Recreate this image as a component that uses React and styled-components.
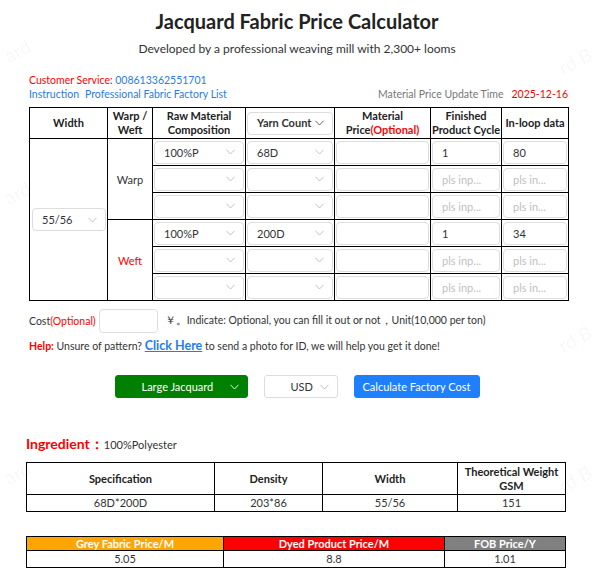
import React from "react";
import styled, { createGlobalStyle } from "styled-components";

const GlobalStyle = createGlobalStyle`
  body {
    margin: 0;
    background: #ffffff;
    font-family: Lato, "Liberation Sans", sans-serif;
    color: #333333;
  }
`;

const Page = styled.div`
  position: relative;
  width: 594px;
  overflow: hidden;
  padding-bottom: 16px;
`;

const Watermarks = styled.div`
  position: absolute;
  inset: 0;
  pointer-events: none;
`;

const Mark = styled.span`
  position: absolute;
  font-size: 19px;
  line-height: 22px;
  color: rgba(0, 0, 0, 0.045);
  transform: rotate(-28deg);
  white-space: nowrap;
`;

const Title = styled.h1`
  margin: 0;
  padding-top: 9px;
  text-align: center;
  font-size: 20px;
  font-weight: 700;
  color: #222222;
  line-height: 24px;
`;

const Subtitle = styled.div`
  margin-top: 8px;
  text-align: center;
  font-size: 12px;
  color: #333333;
  line-height: 16px;
`;

const Info = styled.div`
  margin: 16px 26px 0 29px;
  font-size: 10.5px;
  line-height: 14px;
`;

const InfoRow = styled.div`
  display: flex;
  justify-content: space-between;
  align-items: center;
`;

const Links = styled.div`
  display: flex;
  gap: 6px;
`;

const Red = styled.span`
  color: #ff0000;
  font-weight: ${(p) => (p.$bold ? 700 : 400)};
`;

const Blue = styled.span`
  color: #2a7be4;
`;

const Grey = styled.span`
  color: #777777;
  margin-right: 8px;
`;

const Table = styled.table`
  border-collapse: collapse;
  table-layout: fixed;
  margin: ${(p) => p.$margin || "0"};
  width: ${(p) => p.$width}px;
  font-size: 11px;

  th,
  td {
    border: 1px solid #000000;
    padding: 0;
    text-align: center;
  }
`;

const Head = styled.th`
  height: 30px;
  font-weight: 700;
  color: #222222;
  line-height: 14px;
`;

const Cell = styled.td`
  height: 26px;
  color: ${(p) => (p.$red ? "#ff0000" : "#333333")};
`;

const Box = styled.div`
  box-sizing: border-box;
  margin: 0 1px;
  height: 23px;
  border: 1px solid #dddddd;
  border-radius: 4px;
  display: flex;
  align-items: center;
  justify-content: space-between;
  padding: 0 8px 0 9px;
  background: #ffffff;
  color: ${(p) => (p.$placeholder ? "#c0c0c0" : "#333333")};
  font-size: 11px;
  font-weight: ${(p) => (p.$bold ? 700 : 400)};
  text-align: left;
  white-space: nowrap;
  overflow: hidden;
`;

const WidthBox = styled(Box)`
  width: 74px;
  margin: 0 2px;
`;

const Chevron = ({ color = "#bbbbbb" }) => (
  <svg width="9" height="6" viewBox="0 0 9 6" fill="none">
    <path d="M0.5 0.8 L4.5 5 L8.5 0.8" stroke={color} strokeWidth="0.9" />
  </svg>
);

const Select = ({ value, bold, chevron }) => (
  <Box $bold={bold}>
    <span>{value}</span>
    <Chevron color={chevron} />
  </Box>
);

const Input = ({ value, placeholder }) => (
  <Box $placeholder={!value && !!placeholder}>
    <span>{value || placeholder}</span>
  </Box>
);

const CostRow = styled.div`
  display: flex;
  align-items: center;
  margin: 8px 0 0 29px;
  font-size: 10.5px;
  color: #333333;
`;

const CostInput = styled.div`
  width: 59px;
  height: 24px;
  box-sizing: border-box;
  border: 1px solid #dddddd;
  border-radius: 4px;
  margin: 0 7px 0 3px;
`;

const HelpRow = styled.div`
  margin: 5px 0 0 29px;
  font-size: 10.5px;
  color: #333333;
  line-height: 16px;
`;

const ClickHere = styled.a`
  color: #1e7ef0;
  font-weight: 700;
  font-size: 12.5px;
  text-decoration: underline;
`;

const Actions = styled.div`
  display: flex;
  justify-content: center;
  gap: 16px;
  margin-top: 21px;
`;

const Button = styled.div`
  box-sizing: border-box;
  height: 23px;
  width: ${(p) => p.$w}px;
  border-radius: 3px;
  display: flex;
  align-items: center;
  justify-content: ${(p) => (p.$between ? "space-between" : "center")};
  padding: ${(p) => (p.$between ? "0 8px 0 26px" : "0")};
  font-size: 11px;
  background: ${(p) => p.$bg};
  color: ${(p) => p.$fg};
  border: 1px solid ${(p) => p.$border || p.$bg};
`;

const Ingredient = styled.div`
  margin: 37px 0 0 26px;
  font-size: 11px;
  display: flex;
  align-items: baseline;
  color: #333333;
`;

const IngLabel = styled.span`
  color: #ff0000;
  font-weight: 700;
  font-size: 14px;
`;

const SpecHead = styled.th`
  height: 31px;
  font-weight: 700;
  color: #222222;
  line-height: 14px;
`;

const SpecCell = styled.td`
  height: 16px;
  color: #333333;
  line-height: 14px;
`;

const PriceHead = styled.th`
  height: 13px;
  background: ${(p) => p.$bg};
  color: #ffffff;
  font-weight: 700;
  line-height: 13px;
`;

const rows = [
  { kind: "Warp", mat: "100%P", yarn: "68D", cycle: "1", loop: "80" },
  { kind: "Warp" },
  { kind: "Warp" },
  { kind: "Weft", mat: "100%P", yarn: "200D", cycle: "1", loop: "34" },
  { kind: "Weft" },
  { kind: "Weft" },
];

// only the slivers of the tiled watermark that fall inside the view
const marks = [
  { left: 4, top: 40, text: "ard" },
  { left: 558, top: 50, text: "rd B" },
  { left: 4, top: 182, text: "ard" },
  { left: 558, top: 328, text: "rd B" },
  { left: 4, top: 462, text: "ard" },
  { left: 558, top: 468, text: "rd B" },
];

export default function App() {
  return (
    <Page>
      <GlobalStyle />
      <Watermarks>
        {marks.map((m, i) => (
          <Mark key={i} style={{ left: m.left, top: m.top }}>
            {m.text}
          </Mark>
        ))}
      </Watermarks>

      <Title>Jacquard Fabric Price Calculator</Title>
      <Subtitle>Developed by a professional weaving mill with 2,300+ looms</Subtitle>

      <Info>
        <div>
          <Red>Customer Service: </Red>
          <Blue>008613362551701</Blue>
        </div>
        <InfoRow>
          <Links>
            <Blue>Instruction</Blue>
            <Blue>Professional Fabric Factory List</Blue>
          </Links>
          <div>
            <Grey>Material Price Update Time</Grey>
            <Red>2025-12-16</Red>
          </div>
        </InfoRow>
      </Info>

      <Table $width={539} $margin="6px 0 0 29px">
        <colgroup>
          <col style={{ width: 78 }} />
          <col style={{ width: 45 }} />
          <col style={{ width: 93 }} />
          <col style={{ width: 89 }} />
          <col style={{ width: 96 }} />
          <col style={{ width: 71 }} />
          <col style={{ width: 67 }} />
        </colgroup>
        <thead>
          <tr>
            <Head>Width</Head>
            <Head>
              Warp /<br />
              Weft
            </Head>
            <Head>
              Raw Material
              <br />
              Composition
            </Head>
            <Head>
              <Select value="Yarn Count" bold chevron="#555555" />
            </Head>
            <Head>
              Material
              <br />
              Price<Red $bold>(Optional)</Red>
            </Head>
            <Head>
              Finished
              <br />
              Product Cycle
            </Head>
            <Head>In-loop data</Head>
          </tr>
        </thead>
        <tbody>
          {rows.map((r, i) => (
            <tr key={i}>
              {i === 0 && (
                <Cell rowSpan={6}>
                  <WidthBox>
                    <span>55/56</span>
                    <Chevron />
                  </WidthBox>
                </Cell>
              )}
              {i % 3 === 0 && (
                <Cell rowSpan={3} $red={r.kind === "Weft"}>
                  {r.kind}
                </Cell>
              )}
              <Cell>
                <Select value={r.mat} />
              </Cell>
              <Cell>
                <Select value={r.yarn} />
              </Cell>
              <Cell>
                <Input />
              </Cell>
              <Cell>
                <Input value={r.cycle} placeholder="pls inp..." />
              </Cell>
              <Cell>
                <Input value={r.loop} placeholder="pls in..." />
              </Cell>
            </tr>
          ))}
        </tbody>
      </Table>

      <CostRow>
        Cost<Red>(Optional)</Red>
        <CostInput />
        ￥。Indicate: Optional, you can fill it out or not，Unit(10,000 per ton)
      </CostRow>

      <HelpRow>
        <Red $bold>Help:</Red> Unsure of pattern? <ClickHere>Click Here</ClickHere> to send a
        photo for ID, we will help you get it done!
      </HelpRow>

      <Actions>
        <Button $w={133} $bg="#008000" $fg="#ffffff" $between>
          <span>Large Jacquard</span>
          <Chevron color="#ffffff" />
        </Button>
        <Button $w={74} $bg="#ffffff" $fg="#333333" $border="#dddddd" $between>
          <span>USD</span>
          <Chevron />
        </Button>
        <Button $w={126} $bg="#1e80ff" $fg="#ffffff">
          Calculate Factory Cost
        </Button>
      </Actions>

      <Ingredient>
        <IngLabel>Ingredient：</IngLabel>
        <span>100%Polyester</span>
      </Ingredient>

      <Table $width={539} $margin="8px 0 0 26px">
        <colgroup>
          <col style={{ width: 188 }} />
          <col style={{ width: 108 }} />
          <col style={{ width: 135 }} />
          <col style={{ width: 108 }} />
        </colgroup>
        <thead>
          <tr>
            <SpecHead>Specification</SpecHead>
            <SpecHead>Density</SpecHead>
            <SpecHead>Width</SpecHead>
            <SpecHead>
              Theoretical Weight
              <br />
              GSM
            </SpecHead>
          </tr>
        </thead>
        <tbody>
          <tr>
            <SpecCell>68D*200D</SpecCell>
            <SpecCell>203*86</SpecCell>
            <SpecCell>55/56</SpecCell>
            <SpecCell>151</SpecCell>
          </tr>
        </tbody>
      </Table>

      <Table $width={539} $margin="24px 0 0 26px">
        <colgroup>
          <col style={{ width: 197 }} />
          <col style={{ width: 221 }} />
          <col style={{ width: 121 }} />
        </colgroup>
        <thead>
          <tr>
            <PriceHead $bg="#ffa500">Grey Fabric Price/M</PriceHead>
            <PriceHead $bg="#ff0000">Dyed Product Price/M</PriceHead>
            <PriceHead $bg="#808080">FOB Price/Y</PriceHead>
          </tr>
        </thead>
        <tbody>
          <tr>
            <SpecCell>5.05</SpecCell>
            <SpecCell>8.8</SpecCell>
            <SpecCell>1.01</SpecCell>
          </tr>
        </tbody>
      </Table>
    </Page>
  );
}
